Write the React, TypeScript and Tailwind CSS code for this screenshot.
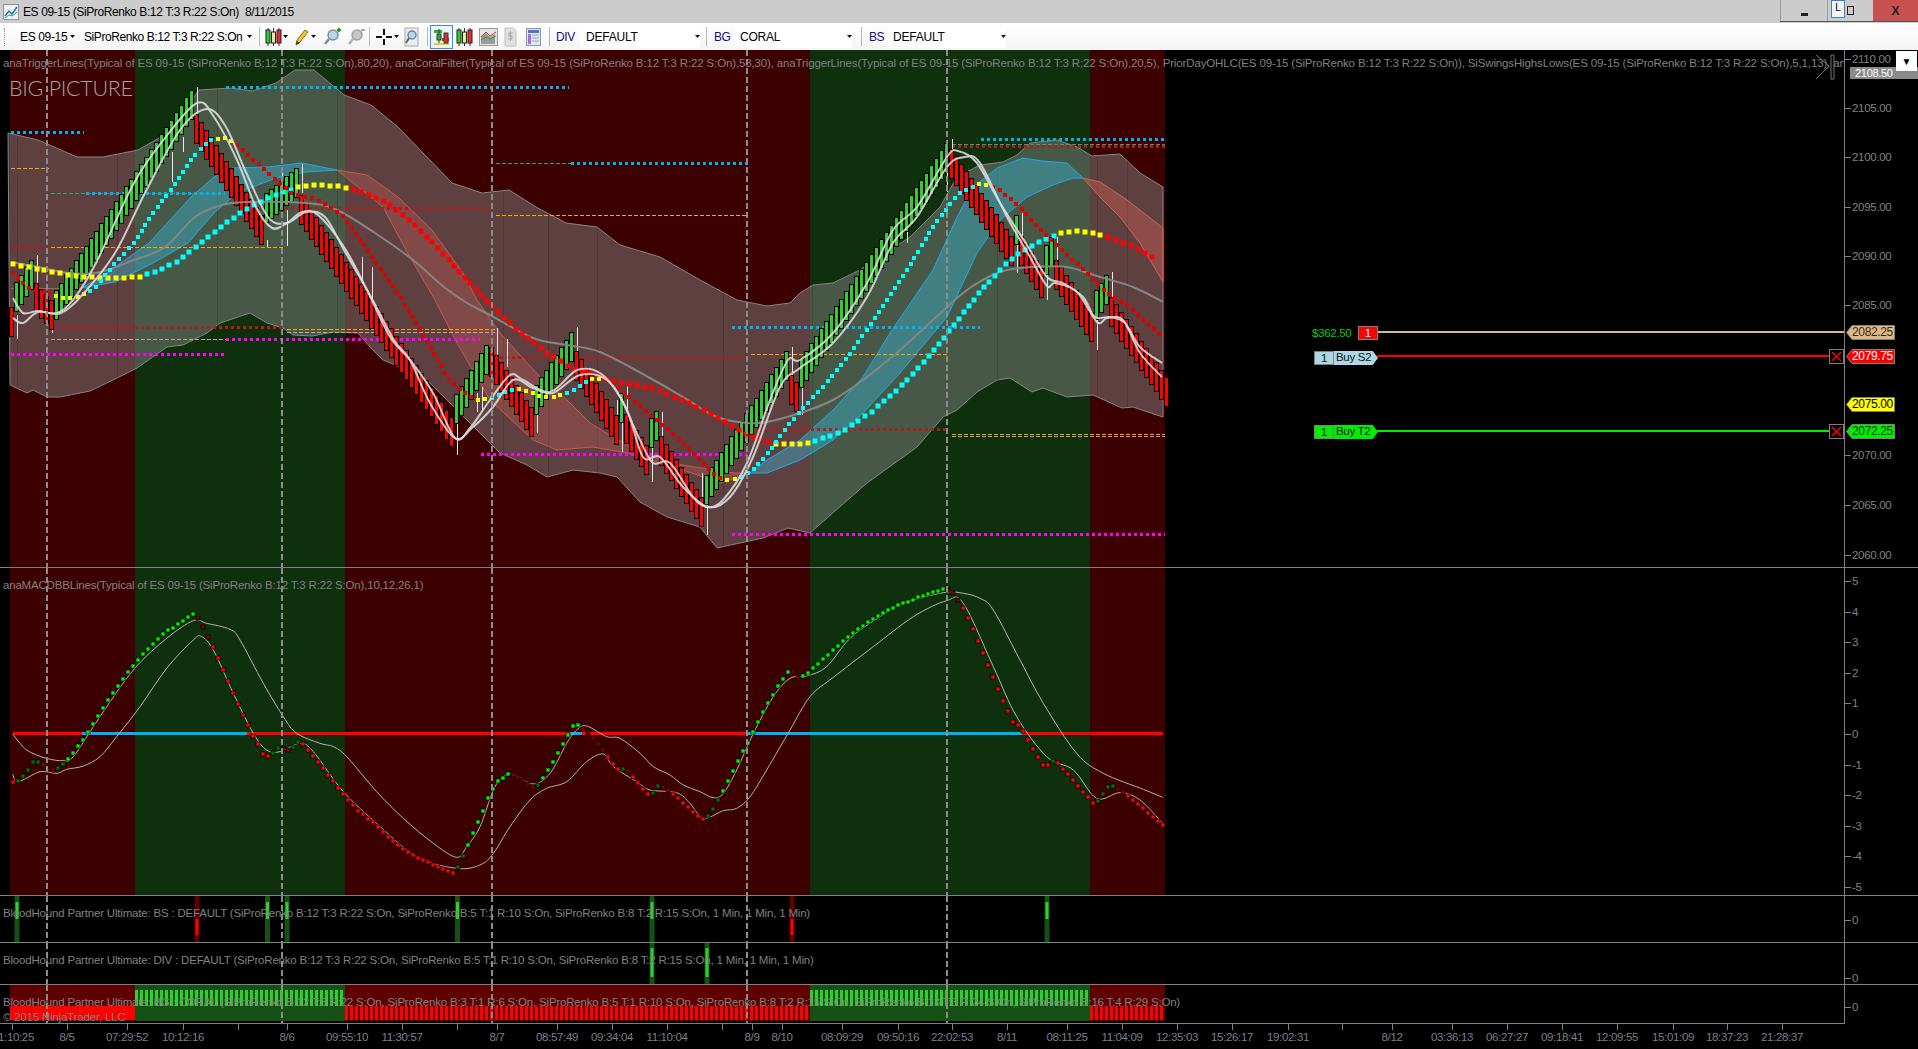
import type { ReactNode } from 'react';

type Pts = number[][];

const RED_BG = '#3c0000';
const GREEN_BG = '#0e300d';

// session backgrounds, same x in every pane
const regions = [
  { x1: 10, x2: 135, up: false },
  { x1: 135, x2: 345, up: true },
  { x1: 345, x2: 810, up: false },
  { x1: 810, x2: 1090, up: true },
  { x1: 1090, x2: 1165, up: false },
];
const dashedX = [47, 282, 492, 747, 947];

// renko runs: x1, centre1, x2, centre2, up
const runs: [number, number, number, number, boolean][] = [
  [12, 322, 12, 322, false],
  [17, 297, 32, 275, true],
  [37, 298, 52, 315, false],
  [57, 305, 192, 105, true],
  [197, 129, 262, 230, false],
  [267, 208, 297, 183, true],
  [302, 210, 452, 432, false],
  [457, 409, 487, 360, true],
  [492, 362, 532, 422, false],
  [537, 400, 572, 347, true],
  [577, 366, 617, 430, false],
  [622, 408, 622, 408, true],
  [627, 429, 647, 460, false],
  [652, 433, 657, 426, true],
  [662, 451, 702, 512, false],
  [707, 490, 787, 366, true],
  [792, 390, 797, 397, false],
  [802, 373, 947, 158, true],
  [952, 164, 1012, 251, false],
  [1017, 230, 1017, 230, true],
  [1022, 251, 1042, 283, false],
  [1047, 260, 1052, 252, true],
  [1057, 275, 1092, 327, false],
  [1097, 305, 1107, 290, true],
  [1112, 312, 1167, 392, false],
];

const wicks = [
  [197, 87, 128], [183, 137, 152], [172, 152, 182], [37, 255, 287], [17, 315, 339], [52, 328, 333],
  [267, 240, 247], [282, 167, 200], [302, 164, 193], [287, 210, 246], [362, 257, 287], [372, 267, 300],
  [457, 423, 455], [497, 328, 355], [507, 339, 367], [477, 393, 412], [482, 387, 410], [537, 413, 433],
  [577, 327, 355], [617, 400, 443], [627, 386, 415], [622, 420, 452], [652, 447, 482], [662, 412, 437],
  [702, 473, 497], [707, 503, 535], [792, 347, 375], [802, 388, 415], [747, 415, 430], [952, 139, 150],
  [947, 170, 192], [907, 232, 243], [802, 389, 415], [1017, 245, 273], [1022, 213, 237], [1047, 275, 300],
  [1057, 237, 260], [1097, 320, 350], [1112, 272, 297], [1167, 404, 407],
];

const bandTop: Pts = [
  [8, 133], [38, 140], [77, 157], [103, 157], [138, 150], [168, 133], [199, 90], [230, 88], [253, 91], [276, 83],
  [295, 70], [314, 70], [344, 95], [371, 105], [398, 127], [452, 183], [482, 193], [509, 190], [536, 207],
  [566, 223], [597, 227], [620, 245], [660, 257], [700, 280], [737, 300], [767, 306], [790, 303], [800, 293],
  [813, 285], [833, 283], [860, 270], [910, 237], [940, 207], [957, 177], [980, 165], [1003, 162], [1017, 155],
  [1030, 143], [1057, 140], [1077, 147], [1092, 156], [1120, 154], [1140, 173], [1163, 187],
];
const bandBottom: Pts = [
  [10, 385], [27, 393], [33, 390], [47, 397], [60, 397], [90, 391], [117, 378], [137, 368], [167, 347], [183, 345],
  [207, 333], [220, 323], [250, 313], [267, 323], [283, 328], [293, 335], [312, 336], [333, 332], [358, 333],
  [370, 347], [383, 360], [400, 367], [430, 383], [460, 413], [500, 453], [527, 465], [547, 477], [573, 470],
  [600, 473], [617, 477], [640, 502], [667, 517], [700, 527], [717, 548], [763, 538], [788, 528], [810, 533],
  [867, 483], [917, 447], [943, 417], [957, 410], [977, 392], [997, 380], [1010, 378], [1032, 392], [1043, 388],
  [1067, 397], [1093, 395], [1122, 408], [1133, 407], [1163, 417],
];
const sessionX = [17, 117, 217, 337, 503, 548, 597, 723, 812, 997, 1097, 1127];

const blueA: Pts = [
  [82, 288], [111, 270], [149, 243], [191, 197], [214, 177], [233, 168], [268, 167], [302, 163], [337, 170],
  [306, 172], [276, 178], [237, 193], [214, 213], [188, 243], [153, 263], [115, 282],
];
const redA: Pts = [
  [337, 170], [367, 175], [398, 197], [432, 230], [463, 273], [477, 300], [500, 333], [540, 377], [567, 400],
  [590, 423], [613, 437], [647, 455], [683, 465], [733, 473], [750, 473], [720, 483], [683, 470], [627, 453],
  [593, 447], [557, 450], [533, 440], [490, 400], [457, 343], [435, 300], [406, 250], [383, 207],
];
const blueB: Pts = [
  [750, 473], [767, 460], [800, 440], [833, 410], [863, 377], [890, 333], [933, 270], [957, 217], [973, 187],
  [997, 168], [1023, 158], [1042, 161], [1067, 163], [1083, 178], [1073, 178], [1053, 185], [1027, 197],
  [1000, 220], [977, 253], [947, 317], [900, 373], [863, 413], [833, 440], [800, 460], [767, 473],
];
const redB: Pts = [
  [1083, 178], [1100, 182], [1127, 200], [1163, 228], [1163, 282], [1140, 243], [1120, 217], [1100, 197],
];

const grayLine: Pts = [
  [11, 262], [38, 267], [61, 272], [96, 273], [134, 260], [165, 247], [195, 217], [222, 205], [249, 202], [306, 203],
  [337, 210], [375, 233], [413, 260], [444, 287], [467, 303], [490, 315], [533, 338], [567, 345], [600, 352],
  [650, 378], [683, 397], [717, 417], [747, 423], [767, 422], [800, 413], [833, 400], [867, 377], [900, 350],
  [933, 320], [967, 290], [1000, 272], [1033, 267], [1067, 267], [1100, 277], [1133, 287], [1163, 302],
];

const whiteA: Pts = [
  [13, 298], [23, 313], [38, 311], [57, 313], [73, 300], [96, 263], [134, 183], [165, 138], [197, 103], [214, 117],
  [237, 160], [256, 207], [272, 228], [287, 223], [302, 212], [318, 215], [344, 247], [367, 290], [390, 337],
  [410, 360], [433, 393], [455, 438], [470, 428], [490, 400], [510, 375], [523, 380], [550, 392], [577, 370],
  [600, 373], [620, 397], [640, 440], [653, 463], [670, 463], [693, 497], [707, 507], [723, 500], [747, 463],
  [770, 400], [788, 360], [800, 360], [833, 333], [867, 283], [893, 230], [917, 207], [947, 157], [958, 151],
  [977, 163], [1000, 203], [1027, 245], [1047, 277], [1063, 283], [1083, 297], [1095, 317], [1110, 317],
  [1125, 323], [1140, 347], [1162, 363],
];
const whiteB: Pts = [
  [13, 318], [23, 323], [38, 312], [61, 313], [84, 293], [115, 253], [145, 193], [180, 130], [207, 109], [226, 127],
  [245, 170], [268, 217], [287, 223], [306, 212], [325, 217], [344, 250], [371, 297], [394, 340], [410, 360],
  [430, 403], [455, 438], [473, 427], [493, 407], [513, 380], [533, 388], [553, 393], [580, 375], [607, 380],
  [627, 410], [643, 457], [660, 457], [683, 487], [708, 507], [730, 497], [753, 457], [780, 387], [800, 368],
  [833, 343], [867, 297], [893, 243], [917, 217], [947, 167], [965, 157], [980, 163], [1007, 217], [1030, 257],
  [1047, 286], [1055, 283], [1077, 292], [1097, 322], [1107, 318], [1123, 320], [1140, 353], [1162, 377],
];

const slowDots: Pts = [
  [13, 264], [80, 277], [111, 278], [138, 277], [153, 273], [176, 262], [195, 248], [226, 223], [245, 210], [264, 200],
  [283, 192], [302, 186], [325, 185], [344, 187], [360, 192], [383, 200], [413, 223], [440, 250], [467, 280],
  [494, 308], [517, 330], [543, 350], [570, 367], [617, 382], [653, 388], [683, 400], [717, 417], [748, 435],
  [773, 444], [800, 444], [813, 442], [843, 431], [870, 413], [900, 387], [928, 358], [953, 327], [977, 295],
  [1000, 270], [1020, 252], [1050, 237], [1063, 232], [1080, 231], [1095, 233], [1107, 237], [1133, 246], [1158, 261],
];
const slowColors: [number, string][] = [
  [80, '#ffff00'], [111, '#ffff00'], [140, '#ffff00'], [295, '#00ffff'], [350, '#ffff00'], [768, '#ff0000'],
  [808, '#ffff00'], [1060, '#00ffff'], [1100, '#ffff00'], [1170, '#ff0000'],
];
const fastDots: Pts = [
  [13, 273], [27, 287], [65, 298], [80, 297], [96, 287], [115, 263], [134, 243], [153, 213], [176, 183], [195, 155],
  [210, 140], [228, 138], [245, 152], [268, 173], [291, 193], [318, 200], [344, 217], [367, 250], [398, 293],
  [427, 342], [450, 380], [467, 395], [478, 400], [493, 398], [510, 390], [520, 389], [543, 397], [557, 397],
  [573, 390], [593, 378], [607, 380], [633, 400], [660, 423], [677, 437], [693, 453], [717, 477], [728, 480],
  [740, 478], [753, 470], [767, 455], [783, 432], [803, 408], [823, 387], [850, 354], [880, 310], [907, 270],
  [933, 227], [957, 195], [970, 188], [980, 184], [997, 188], [1020, 207], [1040, 230], [1060, 248], [1087, 273],
  [1107, 293], [1130, 307], [1160, 335],
];
const fastColors: [number, string][] = [
  [50, '#e00000'], [85, '#ffff00'], [215, '#00ffff'], [232, '#ffff00'], [472, '#e00000'], [487, '#ffff00'],
  [512, '#00ffff'], [565, '#ffff00'], [590, '#00ffff'], [603, '#ffff00'], [722, '#e00000'], [735, '#ffff00'],
  [975, '#00ffff'], [990, '#ffff00'], [1170, '#e00000'],
];

const levels: [number, number, number, string, number, string][] = [
  [51, 226, 193, '#3c9a78', 1, '4 2'],
  [496, 571, 163, '#3c9a78', 1, '4 2'],
  [952, 1165, 144, '#3c9a78', 1, '4 2'],
  [11, 49, 168, '#ffa500', 1, '4 2'],
  [51, 283, 247, '#ffa500', 1, '4 2'],
  [496, 747, 215, '#ffa500', 1, '4 2'],
  [751, 948, 354, '#ffa500', 1, '4 2'],
  [287, 495, 329, '#ffa500', 1, '4 2'],
  [952, 1165, 434, '#ffa500', 1, '4 2'],
  [51, 226, 339, '#c8a0a0', 1, '4 2'],
  [287, 495, 332, '#c8a0a0', 1, '4 2'],
  [952, 1165, 436, '#c8a0a0', 1, '4 2'],
  [11, 50, 247, '#b01c1c', 3, '3 3'],
  [51, 283, 327, '#b01c1c', 3, '3 3'],
  [285, 495, 208, '#b01c1c', 3, '3 3'],
  [500, 748, 357, '#b01c1c', 3, '3 3'],
  [751, 948, 429, '#b01c1c', 3, '3 3'],
  [952, 1165, 146, '#b01c1c', 3, '3 3'],
  [226, 569, 87, '#00b0f0', 3, '3 3'],
  [11, 84, 132, '#00b0f0', 3, '3 3'],
  [86, 225, 193, '#00b0f0', 3, '3 3'],
  [571, 749, 163, '#00b0f0', 3, '3 3'],
  [732, 980, 327, '#00b0f0', 3, '3 3'],
  [981, 1164, 139, '#00b0f0', 3, '3 3'],
  [11, 224, 354, '#ff00ff', 3, '3 3'],
  [226, 480, 339, '#ff00ff', 3, '3 3'],
  [481, 747, 454, '#ff00ff', 3, '3 3'],
  [732, 1165, 534, '#ff00ff', 3, '3 3'],
];

// MACD dots, read off at 3x: y = 570 + v / 3, x = (38 + 15 i) / 3
const macd = [
  635, 632, 618, 600, 576, 576, 585, 597, 600, 594, 582, 567, 549, 528, 509, 486, 462, 438, 414, 390, 369, 348, 327, 306,
  288, 270, 252, 237, 222, 207, 192, 180, 174, 162, 153, 141, 132, 144, 171, 201, 231, 264, 300, 333, 369, 402, 435, 465,
  498, 522, 552, 558, 549, 534, 537, 540, 531, 516, 522, 540, 558, 576, 594, 615, 633, 654, 672, 690, 705, 723, 732, 747,
  756, 771, 786, 801, 813, 825, 837, 846, 855, 864, 870, 876, 885, 891, 897, 903, 909, 891, 858, 825, 789, 756, 723, 684,
  657, 633, 624, 612, 615, 621, 630, 642, 651, 645, 624, 600, 576, 549, 522, 495, 468, 465, 477, 489, 504, 522, 540, 561,
  582, 597, 597, 603, 621, 639, 657, 672, 669, 648, 651, 660, 672, 684, 699, 711, 726, 738, 747, 738, 717, 690, 663, 633,
  603, 573, 543, 519, 486, 456, 426, 399, 375, 348, 327, 306, 306, 324, 318, 309, 294, 282, 267, 255, 240, 228, 213, 201,
  189, 177, 168, 156, 147, 138, 129, 120, 114, 105, 99, 96, 90, 81, 78, 72, 66, 63, 57, 60, 69, 90, 114, 144, 177, 213,
  249, 285, 321, 357, 393, 423, 456, 465, 483, 510, 537, 561, 585, 585, 573, 579, 597, 612, 630, 648, 666, 681, 699, 693,
  672, 651, 648, 657, 666, 678, 690, 702, 714, 729, 741, 753, 765,
];
const G = '#00f000';
const DG = '#007000';
const R = '#ff0000';
const DR = '#800000';
const macdColors: [number, string][] = [
  [38, R], [113, DG], [158, DR], [188, DG], [578, G], [623, DR], [803, R], [833, DG], [863, DR], [893, DG], [1358, R],
  [1388, DG], [1523, G], [1598, DR], [1613, DG], [1733, G], [1808, DR], [1853, R], [1868, DG], [1883, DR], [1943, R],
  [1973, DG], [2003, DR], [2108, R], [2153, DG], [2363, G], [2393, DR], [2828, G], [2873, DR], [3144, R], [3159, DG],
  [3279, R], [3339, DG], [3369, DR], [3500, R],
];
const macdUpper: Pts = [
  [38, 492], [80, 540], [140, 565], [190, 572], [220, 560], [300, 440], [400, 300], [500, 205], [580, 152], [620, 160],
  [690, 178], [720, 210], [790, 340], [850, 440], [890, 490], [960, 520], [1000, 530], [1040, 560], [1130, 665],
  [1210, 745], [1300, 820], [1370, 862], [1400, 830], [1440, 770], [1480, 660], [1510, 620], [1540, 612], [1600, 642],
  [1650, 610], [1700, 520], [1730, 480], [1760, 468], [1820, 500], [1860, 505], [1920, 550], [1960, 590], [2010, 615],
  [2050, 645], [2100, 665], [2140, 683], [2170, 670], [2210, 600], [2260, 490], [2320, 380], [2370, 325], [2420, 318],
  [2480, 290], [2550, 205], [2640, 140], [2710, 100], [2830, 68], [2890, 70], [2940, 85], [2980, 120], [3060, 270],
  [3130, 400], [3230, 550], [3310, 610], [3430, 658], [3488, 682],
];
const macdLower: Pts = [
  [38, 612], [55, 635], [120, 605], [170, 610], [200, 598], [250, 588], [300, 560], [350, 500], [420, 410], [500, 295],
  [580, 210], [605, 200], [640, 240], [700, 370], [760, 490], [800, 540], [840, 545], [900, 520], [940, 545], [1030, 665],
  [1130, 760], [1250, 860], [1370, 895], [1440, 885], [1480, 850], [1530, 770], [1590, 690], [1640, 655], [1700, 635],
  [1760, 575], [1810, 552], [1840, 590], [1910, 635], [1950, 660], [2030, 668], [2070, 700], [2110, 745], [2170, 722],
  [2210, 715], [2250, 680], [2300, 600], [2370, 480], [2430, 380], [2500, 322], [2620, 230], [2740, 140], [2840, 92],
  [2890, 100], [2980, 290], [3050, 440], [3140, 560], [3220, 600], [3290, 685], [3360, 668], [3420, 690], [3488, 760],
];
const zeroLine: [number, number, string][] = [
  [13, 82, '#ff0000'], [82, 247, '#00b0f0'], [247, 570, '#ff0000'], [570, 582, '#00b0f0'], [582, 747, '#ff0000'],
  [747, 1022, '#00b0f0'], [1022, 1163, '#ff0000'],
];

const mainTicks: [string, number][] = [
  ['2110.00', 59], ['2105.00', 108], ['2100.00', 157], ['2095.00', 207], ['2090.00', 256], ['2085.00', 305],
  ['2070.00', 455], ['2065.00', 505], ['2060.00', 555],
];
const macdTicks: [string, number][] = [
  ['5', 581], ['4', 612], ['3', 642], ['2', 673], ['1', 703], ['0', 734], ['-1', 765], ['-2', 795], ['-3', 826],
  ['-4', 856], ['-5', 887],
];
const timeLabels: [string, number][] = [
  ['1:10:25', 16], ['8/5', 67], ['07:29:52', 127], ['10:12:16', 183], ['8/6', 287], ['09:55:10', 347],
  ['11:30:57', 402], ['8/7', 497], ['08:57:49', 557], ['09:34:04', 612], ['11:10:04', 667], ['8/9', 752],
  ['8/10', 782], ['08:09:29', 842], ['09:50:16', 898], ['22:02:53', 952], ['8/11', 1007], ['08:11:25', 1067],
  ['11:04:09', 1122], ['12:35:03', 1177], ['15:26:17', 1232], ['19:02:31', 1288], ['8/12', 1392], ['03:36:13', 1452],
  ['06:27:27', 1507], ['09:18:41', 1562], ['12:09:55', 1617], ['15:01:09', 1673], ['18:37:23', 1727], ['21:28:37', 1782],
];
const timeTicks = [12, 67, 127, 183, 238, 287, 347, 402, 457, 497, 557, 612, 667, 722, 752, 782, 842, 898, 952, 1007, 1067, 1122, 1177, 1232, 1288, 1342, 1392, 1452, 1507, 1562, 1617, 1673, 1727, 1782];

const priceTags = [
  { label: '2082.25', y: 332, fill: '#deb887', text: 'text-[#3a2a10]' },
  { label: '2079.75', y: 356, fill: '#ff0000', text: 'text-white' },
  { label: '2075.00', y: 404, fill: '#ffff00', text: 'text-black' },
  { label: '2072.25', y: 431, fill: '#00ee00', text: 'text-[#064006]' },
];

const toPoints = (pts: Pts) => pts.map((p) => p.join(',')).join(' ');

// catmull-rom through the read-off points
function smooth(pts: Pts) {
  let d = `M${pts[0][0]} ${pts[0][1]}`;
  for (let i = 0; i < pts.length - 1; i++) {
    const p0 = pts[i - 1] ?? pts[i];
    const p1 = pts[i];
    const p2 = pts[i + 1];
    const p3 = pts[i + 2] ?? p2;
    d += ` C${p1[0] + (p2[0] - p0[0]) / 6} ${p1[1] + (p2[1] - p0[1]) / 6} ${p2[0] - (p3[0] - p1[0]) / 6} ${p2[1] - (p3[1] - p1[1]) / 6} ${p2[0]} ${p2[1]}`;
  }
  return d;
}

const colorAt = (list: [number, string][], x: number) => (list.find((c) => x <= c[0]) ?? list[list.length - 1])[1];

// dots sit at an even distance along the curve
function Dots({ pts, colors, size, step }: { pts: Pts; colors: [number, string][]; size: number; step: number }) {
  const items = [];
  let left = 0;
  for (let i = 0; i < pts.length - 1; i++) {
    const dx = pts[i + 1][0] - pts[i][0];
    const dy = pts[i + 1][1] - pts[i][1];
    const len = Math.hypot(dx, dy);
    let at = left;
    while (at < len) {
      const x = Math.round(pts[i][0] + (dx * at) / len);
      const y = Math.round(pts[i][1] + (dy * at) / len);
      items.push(<rect key={items.length} x={x - size / 2} y={y - size / 2} width={size} height={size} fill={colorAt(colors, x)} />);
      at += step;
    }
    left = at - len;
  }
  return <g>{items}</g>;
}

function Bars() {
  const items = [];
  for (const [x1, y1, x2, y2, up] of runs) {
    const n = Math.max(1, Math.round((x2 - x1) / 5));
    for (let i = 0; i <= (x1 === x2 ? 0 : n); i++) {
      const x = x1 + i * 5;
      const y = Math.round(y1 + ((y2 - y1) * i) / n);
      items.push(
        <rect key={x} x={x - 2.5} y={y - 14.5} width={4} height={29} fill={up ? '#32cd32' : '#ff0000'} stroke="#000" strokeWidth={1} />,
      );
    }
  }
  return <g>{items}</g>;
}

function Regions({ top, height }: { top: number; height: number }) {
  return (
    <g>
      {regions.map((r) => (
        <rect key={r.x1} x={r.x1} y={top} width={r.x2 - r.x1} height={height} fill={r.up ? GREEN_BG : RED_BG} />
      ))}
    </g>
  );
}

function DashedLines({ top, bottom }: { top: number; bottom: number }) {
  return (
    <g>
      {dashedX.map((x) => (
        <line key={x} x1={x} x2={x} y1={top} y2={bottom} stroke="#8c8c8c" strokeWidth={2} strokeDasharray="6 3" />
      ))}
    </g>
  );
}

function Axis({ ticks, top, children }: { ticks: [string, number][]; top: number; children?: ReactNode }) {
  return (
    <div className="relative w-[74px] shrink-0 border-l border-[#808080]">
      {ticks.map(([label, y]) => (
        <div key={label} className="absolute left-0 flex items-center" style={{ top: y - top - 7 }}>
          <span className="h-px w-[6px] bg-[#808080]" />
          <span className="ml-px text-[11.5px] leading-[14px] tracking-[-0.3px] text-[#808080]">{label}</span>
        </div>
      ))}
      {children}
    </div>
  );
}

function Legend({ children, className }: { children: ReactNode; className: string }) {
  return <div className={`absolute left-[3px] whitespace-nowrap text-[11.5px] leading-[14px] text-[#808080] ${className}`}>{children}</div>;
}

function Caret() {
  return (
    <svg width="5" height="3" viewBox="0 0 5 3" className="shrink-0">
      <polygon points="0,0 5,0 2.5,3" fill="#111" />
    </svg>
  );
}

function Sep({ className }: { className: string }) {
  return <div className={`h-[19px] w-px shrink-0 bg-[#b8b8b8] ${className}`} />;
}

function Candles({ className }: { className?: string }) {
  return (
    <svg width="17" height="20" viewBox="0 0 17 20" className={className}>
      <path d="M3 1v18M8.500 1v18M14 1v18" stroke="#333" />
      <rect x="1" y="3" width="4" height="13" fill="#22d322" stroke="#222" />
      <rect x="6.500" y="5" width="4" height="11" fill="#e8e8a0" stroke="#222" />
      <rect x="12" y="3" width="4" height="13" fill="#ee2a2a" stroke="#222" />
    </svg>
  );
}

function Magnifier({ plus, muted }: { plus?: boolean; muted?: boolean }) {
  return (
    <svg width="18" height="20" viewBox="0 0 18 20">
      <circle cx="10" cy="8" r="5" fill={muted ? '#c8c8c8' : '#b9d6ea'} stroke={muted ? '#a0a0a0' : '#7b8fa0'} strokeWidth="1.500" />
      <path d="M6 12l-4 5" stroke={muted ? '#b0b0b0' : '#8a8a8a'} strokeWidth="2.500" />
      {plus && <path d="M14 3h4M16 1v4" stroke="#16a316" strokeWidth="2" />}
      {muted && <path d="M14 3h4" stroke="#a8a8a8" strokeWidth="2" />}
    </svg>
  );
}

function TitleBar() {
  return (
    <div className="flex h-[23px] items-center bg-[#cccccc] text-[12px] text-black">
      <svg width="16" height="16" viewBox="0 0 16 16" className="ml-[3px]">
        <rect x="0.500" y="0.500" width="15" height="15" fill="#eef2f6" stroke="#8a97a5" />
        <path d="M2 12l4-5 3 3 5-7" fill="none" stroke="#2a6fc0" strokeWidth="1.500" />
        <path d="M2 14l4-3 3 1 5-4" fill="none" stroke="#38a838" />
      </svg>
      <span className="ml-[4px] tracking-[-0.4px]">ES 09-15 (SiProRenko B:12 T:3 R:22 S:On)</span>
      <span className="ml-[6px] tracking-[-0.4px]">8/11/2015</span>
      <div className="ml-auto flex h-[22px] self-start border-b border-[#555]">
        <div className="flex w-[47px] items-end justify-center border-l border-[#999] pb-[5px]">
          <span className="h-[3px] w-[7px] bg-[#222]" />
        </div>
        <div className="relative flex w-[46px] items-center justify-center border-l border-[#999]">
          <span className="absolute left-[3px] top-0 h-[18px] w-[14px] border border-[#3b82c4] bg-[#f4f4f4] text-center text-[10px] leading-[13px]">L</span>
          <span className="h-[9px] w-[7px] border border-[#222]" />
        </div>
        <div className="flex w-[45px] items-center justify-center bg-[#c75050] text-[12px] font-bold text-[#222]">X</div>
      </div>
    </div>
  );
}

function Toolbar() {
  return (
    <div className="flex h-[27px] items-center bg-gradient-to-b from-white to-[#f4f4f4] text-[12px] text-black">
      <div className="ml-[4px] h-[18px] w-px shrink-0 border-l border-dotted border-[#999]" />
      <span className="ml-[15px] w-[44px] whitespace-nowrap tracking-[-0.35px]">ES 09-15</span>
      <div className="ml-[6px]"><Caret /></div>
      <span className="ml-[9px] w-[160px] whitespace-nowrap tracking-[-0.42px]">SiProRenko B:12 T:3 R:22 S:On</span>
      <div className="ml-[3px]"><Caret /></div>
      <Sep className="ml-[7px]" />
      <Candles className="ml-[5px]" />
      <div className="ml-px"><Caret /></div>
      <svg width="15" height="20" viewBox="0 0 15 20" className="ml-[6px]">
        <path d="M2 18l1-5 8-10 3 2-8 10z" fill="#f4c430" stroke="#8a6d10" />
        <path d="M2 18l1-4 3 2z" fill="#333" />
      </svg>
      <div className="ml-[2px]"><Caret /></div>
      <div className="ml-[7px]"><Magnifier plus /></div>
      <div className="ml-[6px]"><Magnifier muted /></div>
      <Sep className="ml-[4px]" />
      <svg width="18" height="18" viewBox="0 0 18 18" className="ml-[5px]">
        <path d="M9 1v6M9 11v6M1 9h6M11 9h6" stroke="#111" strokeWidth="2" />
      </svg>
      <div className="ml-[1px]"><Caret /></div>
      <svg width="15" height="20" viewBox="0 0 15 20" className="ml-[5px]">
        <rect x="1" y="1" width="13" height="18" fill="#e6eef4" stroke="#a8a8a8" />
        <circle cx="8" cy="8" r="4" fill="#b9d6ea" stroke="#6d8598" strokeWidth="1.500" />
        <path d="M5 11l-3 5" stroke="#666" strokeWidth="2" />
      </svg>
      <Sep className="ml-[8px]" />
      <div className="ml-[2px] flex h-[24px] w-[23px] items-center justify-center border border-[#3b8ee0] bg-[#eef6fd]">
        <svg width="17" height="20" viewBox="0 0 17 20">
          <path d="M1 3h8v3H1z" fill="#22b522" />
          <path d="M6 2v16" stroke="#333" />
          <rect x="4" y="7" width="4" height="6" fill="#22b522" stroke="#333" />
          <path d="M9 11h7v3H9z" fill="#d83030" />
          <path d="M1 16h15v2H1z" fill="#d8d820" />
          <rect x="11" y="6" width="4" height="10" fill="#d83030" stroke="#333" />
        </svg>
      </div>
      <Candles className="ml-[3px]" />
      <svg width="19" height="20" viewBox="0 0 19 20" className="ml-[6px]">
        <rect x="0.500" y="1.500" width="18" height="17" fill="#e4e4e4" stroke="#9a9a9a" />
        <path d="M2 17V9l5-3 4 4 5-3v10z" fill="#9a9a9a" />
        <path d="M2 10l5-5 4 4 6-4" fill="none" stroke="#d03030" />
        <path d="M2 13l5-3 4 2 6-3" fill="none" stroke="#30a030" />
      </svg>
      <svg width="13" height="20" viewBox="0 0 13 20" className="ml-[6px]">
        <path d="M1 1h8l3 3v15H1z" fill="#e0e0e0" stroke="#c0c0c0" />
        <path d="M9 6H5v3h3v3H4M6.500 4v10" fill="none" stroke="#a8a8a8" />
      </svg>
      <svg width="15" height="20" viewBox="0 0 15 20" className="ml-[9px]">
        <rect x="0.500" y="1.500" width="14" height="17" fill="#dfe8f2" stroke="#8a97a5" />
        <rect x="2" y="3" width="11" height="3" fill="#5078c0" />
        <rect x="2" y="7" width="3" height="10" fill="#a070e0" />
        <path d="M6 8h7M6 11h7M6 14h7" stroke="#9aa7b5" />
      </svg>
      <Sep className="ml-[8px]" />
      <span className="ml-[6px] w-[24px] tracking-[-0.4px] text-[#101080]">DIV</span>
      <div className="flex h-[22px] w-[120px] items-center bg-white pl-[6px]">
        <span className="tracking-[-0.2px]">DEFAULT</span>
        <div className="ml-auto"><Caret /></div>
      </div>
      <Sep className="ml-[6px]" />
      <span className="ml-[7px] w-[21px] tracking-[-0.4px] text-[#101080]">BG</span>
      <div className="flex h-[22px] w-[117px] items-center bg-white pl-[5px]">
        <span className="tracking-[-0.2px]">CORAL</span>
        <div className="ml-auto"><Caret /></div>
      </div>
      <Sep className="ml-[9px]" />
      <span className="ml-[7px] w-[19px] tracking-[-0.4px] text-[#101080]">BS</span>
      <div className="flex h-[22px] w-[118px] items-center bg-white pl-[5px]">
        <span className="tracking-[-0.2px]">DEFAULT</span>
        <div className="ml-auto"><Caret /></div>
      </div>
    </div>
  );
}

function MainChart() {
  return (
    <svg width="1844" height="517" viewBox="0 50 1844 517" className="block">
      <defs>
        <clipPath id="band-clip">
          <polygon points={toPoints([...bandTop, ...[...bandBottom].reverse()])} />
        </clipPath>
      </defs>
      <Regions top={50} height={517} />
      <polygon points={toPoints([...bandTop, ...[...bandBottom].reverse()])} fill="#858585" fillOpacity={0.48} stroke="#858585" />
      <g clipPath="url(#band-clip)">
        {sessionX.map((x) => (
          <line key={x} x1={x + 0.5} x2={x + 0.5} y1={50} y2={567} stroke="#000" strokeOpacity={0.15} />
        ))}
      </g>
      <polygon points={toPoints(blueA)} fill="#36bbdd" fillOpacity={0.4} stroke="#1fa9e8" />
      <polygon points={toPoints(blueB)} fill="#36bbdd" fillOpacity={0.4} stroke="#1fa9e8" />
      <polygon points={toPoints(redA)} fill="#e6645a" fillOpacity={0.25} stroke="#c9584e" />
      <polygon points={toPoints(redB)} fill="#e6645a" fillOpacity={0.35} stroke="#d0625a" />
      <line x1={11} x2={82} y1={288.5} y2={288.5} stroke="#c9584e" />
      {levels.map(([x1, x2, y, color, w, dash], i) => (
        <line key={i} x1={x1} x2={x2} y1={y + 0.5} y2={y + 0.5} stroke={color} strokeWidth={w} strokeDasharray={dash} />
      ))}
      {wicks.map(([x, y1, y2], i) => (
        <line key={i} x1={x + 0.5} x2={x + 0.5} y1={y1} y2={y2} stroke="#e8e8e8" />
      ))}
      <Bars />
      <path d={smooth(grayLine)} fill="none" stroke="#858585" strokeWidth={2} />
      <Dots pts={slowDots} colors={slowColors} size={5} step={8} />
      <Dots pts={fastDots} colors={fastColors} size={4} step={7.2} />
      <path d={smooth(whiteB)} fill="none" stroke="#dcdcdc" strokeOpacity={0.9} strokeWidth={2} />
      <path d={smooth(whiteA)} fill="none" stroke="#dcdcdc" strokeOpacity={0.9} strokeWidth={2} />
      <DashedLines top={50} bottom={567} />
    </svg>
  );
}

function MacdChart() {
  return (
    <svg width="1844" height="327" viewBox="0 568 1844 327" className="block">
      <Regions top={568} height={327} />
      {zeroLine.map(([x1, x2, color]) => (
        <line key={x1} x1={x1} x2={x2} y1={733.500} y2={733.500} stroke={color} strokeWidth={3} />
      ))}
      <path d={smooth(macdUpper.map(([x, y]) => [x / 3, 570 + y / 3]))} fill="none" stroke="#b4b4b4" />
      <path d={smooth(macdLower.map(([x, y]) => [x / 3, 570 + y / 3]))} fill="none" stroke="#b4b4b4" />
      {macd.map((v, i) => (
        <rect
          key={i}
          x={Math.round((38 + 15 * i) / 3) - 2}
          y={Math.round(570 + v / 3) - 2}
          width={4}
          height={4}
          fill={colorAt(macdColors, 38 + 15 * i)}
          stroke="#000"
          strokeWidth={0.6}
        />
      ))}
      <DashedLines top={568} bottom={895} />
    </svg>
  );
}

function SignalChart({ top, height, signals }: { top: number; height: number; signals: [number, string, string, number, number][] }) {
  return (
    <svg width="1844" height={height} viewBox={`0 ${top} 1844 ${height}`} className="block">
      {signals.map(([x, dark, bright, y1, y2]) => (
        <g key={x}>
          <rect x={x - 2.500} y={top} width={5} height={height} fill={dark} />
          <rect x={x - 1.500} y={y1} width={3} height={y2 - y1} fill={bright} />
        </g>
      ))}
      <DashedLines top={top} bottom={top + height} />
    </svg>
  );
}

function CoralChart() {
  const stripes = [];
  for (const r of regions) {
    for (let x = r.x1; x < r.x2; x += 5) {
      stripes.push(
        <rect key={x} x={x} y={r.up ? 990 : 1006} width={r.x1 === 10 ? 5 : 3} height={r.up ? 16 : 14} fill={r.up ? '#32cd32' : '#ff0000'} />,
      );
    }
  }
  return (
    <svg width="1844" height="38" viewBox="0 985 1844 38" className="block">
      {regions.map((r) => (
        <rect key={r.x1} x={r.x1} y={985} width={r.x2 - r.x1} height={36} fill={r.up ? '#155015' : '#5e0000'} />
      ))}
      {stripes}
      <DashedLines top={985} bottom={1023} />
    </svg>
  );
}

function PriceTag({ label, y, fill, text }: { label: string; y: number; fill: string; text: string }) {
  return (
    <div className="absolute left-px h-[15px] w-[49px]" style={{ top: y - 57 }}>
      <svg width="49" height="15" viewBox="0 0 49 15" className="absolute inset-0">
        <polygon points="0.500,7.500 6,0.500 48.500,0.500 48.500,14.500 6,14.500" fill={fill} stroke="#808080" />
      </svg>
      <span className={`relative block pl-[6px] text-[12px] leading-[15px] tracking-[-0.35px] ${text}`}>{label}</span>
    </div>
  );
}

function OrderLabel({ qty, text, fill, className }: { qty: string; text: string; fill: string; className: string }) {
  return (
    <div className={`absolute left-[1314px] flex h-[14px] text-[11.5px] leading-[13px] tracking-[-0.3px] text-[#111] ${className}`}>
      <span className={`w-[20px] border border-[#808080] text-center ${fill}`}>{qty}</span>
      <div className={`w-[44px] pl-[2px] [clip-path:polygon(0_0,88%_0,100%_50%,88%_100%,0_100%)] ${fill}`}>
        {text}
      </div>
    </div>
  );
}

function CloseBox({ className }: { className: string }) {
  return (
    <div className={`absolute left-[1829px] flex h-[15px] w-[15px] items-center justify-center border border-[#808080] bg-black ${className}`}>
      <svg width="11" height="11" viewBox="0 0 11 11">
        <path d="M1 1l9 9M10 1l-9 9" stroke="#ff0000" strokeWidth="1.500" />
      </svg>
    </div>
  );
}

const indicatorLegend =
  'anaTriggerLines(Typical of ES 09-15 (SiProRenko B:12 T:3 R:22 S:On),80,20), anaCoralFilter(Typical of ES 09-15 (SiProRenko B:12 T:3 R:22 S:On),58,30), anaTriggerLines(Typical of ES 09-15 (SiProRenko B:12 T:3 R:22 S:On),20,5), PriorDayOHLC(ES 09-15 (SiProRenko B:12 T:3 R:22 S:On)), SiSwingsHighsLows(ES 09-15 (SiProRenko B:12 T:3 R:22 S:On),5,1,13), ana';

export default function App() {
  return (
    <div className="flex h-screen w-full flex-col overflow-hidden bg-black font-['Liberation_Sans',sans-serif]">
      <TitleBar />
      <Toolbar />

      {/* price pane */}
      <div className="flex h-[518px] border-b border-[#808080]">
        <div className="relative w-[1844px] shrink-0 overflow-hidden">
          <MainChart />
          <Legend className="top-[6px] tracking-[-0.14px]">{indicatorLegend}</Legend>
          <div className="absolute left-[9px] top-[25px] font-['Lato',sans-serif] text-[21.5px] font-light leading-[26px] tracking-[-0.3px] text-[#a8a0a0]">BIG PICTURE</div>

          <svg width="20" height="26" viewBox="0 0 20 26" className="absolute left-[1815px] top-[4px]">
            <path d="M1 1l13 11L1 25M16 1h3v24h-3z" fill="none" stroke="#777" />
          </svg>

          <div className="absolute left-[1312px] top-[276px] text-[11.5px] leading-[14px] tracking-[-0.3px] text-[#00d000]">$362.50</div>
          <div className="absolute left-[1358px] top-[276px] h-[14px] w-[20px] border border-[#808080] bg-[#ff0000] text-center text-[11px] leading-[12px] text-white">1</div>
          <div className="absolute left-[1378px] right-0 top-[281px] h-[2px] bg-[#deb887]" />

          <OrderLabel className="top-[301px]" qty="1" text="Buy S2" fill="bg-[#add8e6]" />
          <div className="absolute left-[1377px] top-[305px] h-[2px] w-[452px] bg-[#ff0000]" />
          <CloseBox className="top-[299px]" />

          <OrderLabel className="top-[375px]" qty="1" text="Buy T2" fill="bg-[#00ee00]" />
          <div className="absolute left-[1377px] top-[380px] h-[2px] w-[452px] bg-[#00ee00]" />
          <CloseBox className="top-[374px]" />
        </div>
        <Axis ticks={mainTicks} top={50}>
          {priceTags.map((t) => (
            <PriceTag key={t.label} {...t} />
          ))}
          <div className="absolute left-[5px] right-0 top-[17px] h-[12px] bg-[#8a8a8a] pl-[5px] text-[11px] leading-[12px] tracking-[-0.3px] text-white">2108.50</div>
          <div className="absolute right-[1px] top-[1px] flex h-[20px] w-[21px] items-center justify-center bg-white text-[10px] text-black">▼</div>
        </Axis>
      </div>

      {/* macd pane */}
      <div className="flex h-[328px] border-b border-[#808080]">
        <div className="relative w-[1844px] shrink-0 overflow-hidden">
          <MacdChart />
          <Legend className="top-[10px] tracking-[-0.19px]">anaMACDBBLines(Typical of ES 09-15 (SiProRenko B:12 T:3 R:22 S:On),10,12,26,1)</Legend>
        </div>
        <Axis ticks={macdTicks} top={568} />
      </div>

      {/* BS signals */}
      <div className="flex h-[47px] border-b border-[#808080]">
        <div className="relative w-[1844px] shrink-0 overflow-hidden">
          <SignalChart
            top={896}
            height={46}
            signals={[
              [17, '#155015', '#32cd32', 902, 919],
              [197, '#5e0000', '#ff0000', 919, 935],
              [267.500, '#155015', '#32cd32', 902, 919],
              [287, '#155015', '#32cd32', 902, 919],
              [457.500, '#155015', '#32cd32', 902, 919],
              [652, '#155015', '#32cd32', 902, 919],
              [792, '#5e0000', '#ff0000', 919, 935],
              [1047, '#155015', '#32cd32', 902, 919],
            ]}
          />
          <Legend className="top-[10px] tracking-[-0.19px]">BloodHound Partner Ultimate: BS : DEFAULT (SiProRenko B:12 T:3 R:22 S:On, SiProRenko B:5 T:1 R:10 S:On, SiProRenko B:8 T:2 R:15 S:On, 1 Min, 1 Min, 1 Min)</Legend>
        </div>
        <Axis ticks={[['0', 920]]} top={896} />
      </div>

      {/* DIV signals */}
      <div className="flex h-[42px] border-b border-[#808080]">
        <div className="relative w-[1844px] shrink-0 overflow-hidden">
          <SignalChart
            top={943}
            height={41}
            signals={[
              [652, '#155015', '#32cd32', 948, 977],
              [707, '#155015', '#32cd32', 948, 977],
            ]}
          />
          <Legend className="top-[10px] tracking-[-0.19px]">BloodHound Partner Ultimate: DIV : DEFAULT (SiProRenko B:12 T:3 R:22 S:On, SiProRenko B:5 T:1 R:10 S:On, SiProRenko B:8 T:2 R:15 S:On, 1 Min, 1 Min, 1 Min)</Legend>
        </div>
        <Axis ticks={[['0', 978]]} top={943} />
      </div>

      {/* BG signals */}
      <div className="flex h-[39px]">
        <div className="relative w-[1844px] shrink-0 overflow-hidden border-b border-[#808080]">
          <CoralChart />
          <Legend className="top-[10px] tracking-[-0.19px]">BloodHound Partner Ultimate: BG : CORAL (SiProRenko B:12 T:3 R:22 S:On, SiProRenko B:3 T:1 R:6 S:On, SiProRenko B:5 T:1 R:10 S:On, SiProRenko B:8 T:2 R:15 S:On, SiProRenko B:13 T:3 R:24 S:On, SiProRenko B:16 T:4 R:29 S:On)</Legend>
          <Legend className="top-[25px] tracking-[-0.19px]">© 2015 NinjaTrader, LLC</Legend>
        </div>
        <Axis ticks={[['0', 1007]]} top={985} />
      </div>

      {/* time axis */}
      <div className="relative min-h-0 flex-1">
        {timeTicks.map((x) => (
          <span key={x} className="absolute top-0 h-[6px] w-px bg-[#808080]" style={{ left: x }} />
        ))}
        {timeLabels.map(([label, x]) => (
          <span key={label} className="absolute top-[6px] -translate-x-1/2 text-[11.5px] leading-[14px] tracking-[-0.35px] text-[#7c7f88]" style={{ left: x }}>
            {label}
          </span>
        ))}
      </div>
    </div>
  );
}
